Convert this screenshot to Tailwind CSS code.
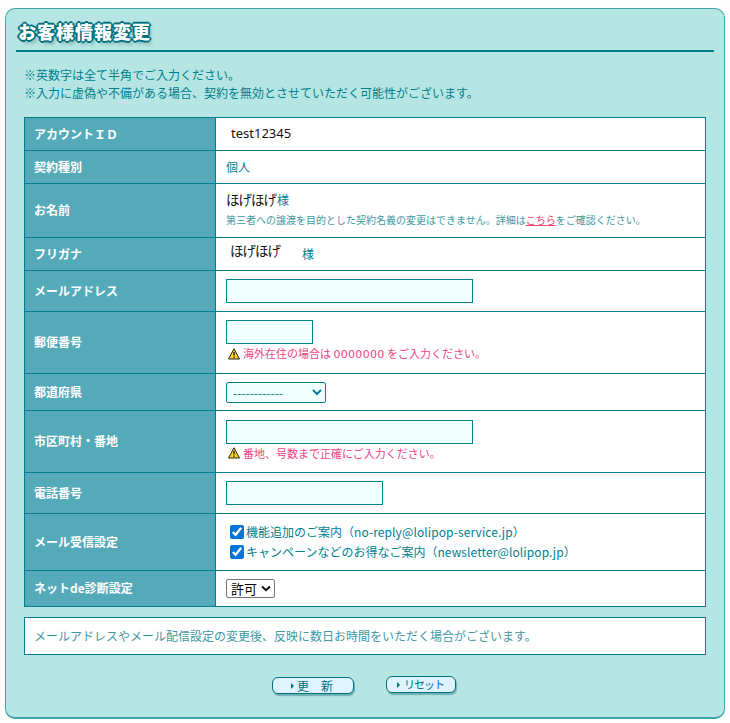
<!DOCTYPE html>
<html lang="ja">
<head>
    <meta charset="UTF-8">
    <title>お客様情報変更</title>
    <script src="https://cdn.jsdelivr.net/npm/@tailwindcss/browser@4"></script>
</head>
<body class="bg-[#fdfdfd] font-['Noto_Sans_CJK_JP','Noto_Sans',sans-serif] text-[12px] text-[#00808f]">
    <div class="ml-[5px] mt-[8px] w-[720px] h-[711px] bg-[#b5e6e3] border border-[#3fa3a8] border-b-2 rounded-[10px] px-[18px] pt-[9px]">
        <div class="-mx-[8px] h-[34px] border-b-2 border-[#00808f] pl-[2px]">
            <h1 class="text-[18px] leading-[26px] font-black tracking-[1px] text-white [text-shadow:-1px_-1px_0_#00707f,1px_-1px_0_#00707f,-1px_1px_0_#00707f,1px_1px_0_#00707f,0_2px_0_#00707f,2px_0_0_#00707f,-2px_0_0_#00707f,0_-2px_0_#00707f,3px_4px_3px_#8fbdba]">お客様情報変更</h1>
        </div>
        <div class="mt-[14px] leading-[18px]">
            <p>※英数字は全て半角でご入力ください。</p>
            <p>※入力に虚偽や不備がある場合、契約を無効とさせていただく可能性がございます。</p>
        </div>
        <table class="mt-[15px] w-[682px] table-fixed border-collapse border border-[#00808f] bg-white">
            <colgroup><col class="w-[191px]"><col></colgroup>
            <tbody>
                <tr class="h-[33px]">
                    <th class="border border-[#00808f] bg-[#55aab9] pl-[9px] pb-[1px] text-left font-bold text-white">アカウントＩＤ</th>
                    <td class="border border-[#00808f] pl-[15px] text-[13px] text-[#111] font-['Noto_Sans',sans-serif]">test12345</td>
                </tr>
                <tr class="h-[33px]">
                    <th class="border border-[#00808f] bg-[#55aab9] pl-[9px] pb-[1px] text-left font-bold text-white">契約種別</th>
                    <td class="border border-[#00808f] pl-[10px] pb-[1px]">個人</td>
                </tr>
                <tr class="h-[54px]">
                    <th class="border border-[#00808f] bg-[#55aab9] pl-[9px] pb-[1px] text-left font-bold text-white">お名前</th>
                    <td class="border border-[#00808f] pl-[10px] pb-[4px]">
                        <p class="leading-[18px]"><span class="text-[13.5px] tracking-[-1px] text-[#111] relative -top-[1px]">ほげほげ</span><span class="ml-[1px] relative -top-[1px]">様</span></p>
                        <p class="mt-[3px] text-[10px] leading-[14px] text-[#3f97a3]">第三者への譲渡を目的とした契約名義の変更はできません。詳細は<a class="text-[#f0446f] underline">こちら</a>をご確認ください。</p>
                    </td>
                </tr>
                <tr class="h-[33px]">
                    <th class="border border-[#00808f] bg-[#55aab9] pl-[9px] pb-[1px] text-left font-bold text-white">フリガナ</th>
                    <td class="border border-[#00808f] pl-[14px] pb-[1px]"><span class="text-[13.5px] tracking-[-1px] text-[#111] relative -top-[3px]">ほげほげ</span><span class="ml-[22px]">様</span></td>
                </tr>
                <tr class="h-[41px]">
                    <th class="border border-[#00808f] bg-[#55aab9] pl-[9px] text-left font-bold text-white">メールアドレス</th>
                    <td class="border border-[#00808f] pl-[10px]"><input type="text" class="block w-[247px] h-[24px] border border-[#00808f] bg-[#f0ffff]"></td>
                </tr>
                <tr class="h-[62px]">
                    <th class="border border-[#00808f] bg-[#55aab9] pl-[9px] pb-[1px] text-left font-bold text-white">郵便番号</th>
                    <td class="border border-[#00808f] pl-[10px] pb-[2px]">
                        <input type="text" class="block w-[87px] h-[24px] border border-[#00808f] bg-[#f0ffff]">
                        <p class="flex items-center gap-[3px] pl-[2px] text-[11px] leading-[18px] text-[#f0437f]">
                            <svg class="w-[12px] h-[12px]" viewBox="0 0 12 12"><path d="M6 .8 11.5 11H.5Z" fill="#ffd21f" stroke="#222" stroke-width="1" stroke-linejoin="round"/><path d="M6 4v3.6M6 8.5v1.3" stroke="#222" stroke-width="1.4"/></svg>
                            <span>海外在住の場合は <span class="font-['DejaVu_Sans',sans-serif] tracking-[0.3px]">0000000</span> をご入力ください。</span>
                        </p>
                    </td>
                </tr>
                <tr class="h-[37px]">
                    <th class="border border-[#00808f] bg-[#55aab9] pl-[9px] pb-[1px] text-left font-bold text-white">都道府県</th>
                    <td class="border border-[#00808f] pl-[10px]">
                        <select class="block w-[100px] h-[21px] border border-[#00808f] rounded-[2px] bg-[#f0ffff] text-[12px] text-[#00808f] pl-[2px]"><option>------------</option></select>
                    </td>
                </tr>
                <tr class="h-[62px]">
                    <th class="border border-[#00808f] bg-[#55aab9] pl-[9px] pb-[1px] text-left font-bold text-white">市区町村・番地</th>
                    <td class="border border-[#00808f] pl-[10px] pb-[2px]">
                        <input type="text" class="block w-[247px] h-[24px] border border-[#00808f] bg-[#f0ffff]">
                        <p class="flex items-center gap-[3px] pl-[2px] text-[11px] leading-[18px] text-[#f0437f]">
                            <svg class="w-[12px] h-[12px]" viewBox="0 0 12 12"><path d="M6 .8 11.5 11H.5Z" fill="#ffd21f" stroke="#222" stroke-width="1" stroke-linejoin="round"/><path d="M6 4v3.6M6 8.5v1.3" stroke="#222" stroke-width="1.4"/></svg>
                            <span>番地、号数まで正確にご入力ください。</span>
                        </p>
                    </td>
                </tr>
                <tr class="h-[41px]">
                    <th class="border border-[#00808f] bg-[#55aab9] pl-[9px] pb-[1px] text-left font-bold text-white">電話番号</th>
                    <td class="border border-[#00808f] pl-[10px]"><input type="text" class="block w-[157px] h-[24px] border border-[#00808f] bg-[#f0ffff]"></td>
                </tr>
                <tr class="h-[57px]">
                    <th class="border border-[#00808f] bg-[#55aab9] pl-[9px] text-left font-bold text-white">メール受信設定</th>
                    <td class="border border-[#00808f] pl-[14px]">
                        <label class="flex items-center gap-[2px] h-[20px]"><input type="checkbox" checked class="w-[14px] h-[14px] accent-[#0075d9]"><span>機能追加のご案内（<span class="tracking-[0.1px]">no-reply@lolipop-service.jp</span>）</span></label>
                        <label class="flex items-center gap-[2px] h-[20px]"><input type="checkbox" checked class="w-[14px] h-[14px] accent-[#0075d9]"><span>キャンペーンなどのお得なご案内（<span class="tracking-[0.1px]">newsletter@lolipop.jp</span>）</span></label>
                    </td>
                </tr>
                <tr class="h-[36px]">
                    <th class="border border-[#00808f] bg-[#55aab9] pl-[9px] pb-[1px] text-left font-bold text-white">ネットde診断設定</th>
                    <td class="border border-[#00808f] pl-[10px]">
                        <div class="flex items-center justify-between w-[49px] h-[19px] border border-[#767676] rounded-[2px] bg-white pl-[4px] pr-[3px] text-[13px] leading-[17px] text-black">
                            <span>許可</span>
                            <svg class="w-[10px] h-[7px]" viewBox="0 0 10 7"><path d="M1 1.5 5 5.2 9 1.5" fill="none" stroke="#111" stroke-width="2"/></svg>
                        </div>
                    </td>
                </tr>
            </tbody>
        </table>
        <div class="mt-[10px] w-[682px] h-[38px] flex items-center border border-[#00808f] bg-white pl-[9px] text-[#3f97a3]">メールアドレスやメール配信設定の変更後、反映に数日お時間をいただく場合がございます。</div>
        <div class="mt-[21px] ml-[248px] flex items-start gap-[32px]">
            <button class="mt-[1px] w-[82px] h-[17px] flex items-center pl-[18px] border border-[#00707f] rounded-[6px] bg-[#dff4ff] shadow-[1px_2px_1px_#6fb0b3] text-[12px] leading-none text-[#006f80]"><span class="mr-[3px] border-y-[3px] border-y-transparent border-l-[3px] border-l-[#00707f]"></span>更　新</button>
            <button class="w-[70px] h-[17px] flex items-center pl-[10px] border border-[#00707f] rounded-[6px] bg-[#dff4ff] shadow-[1px_2px_1px_#6fb0b3] text-[11px] tracking-[-1px] leading-none text-[#006f80]"><span class="mr-[4px] border-y-[3px] border-y-transparent border-l-[3px] border-l-[#00707f]"></span>リセット</button>
        </div>
    </div>
</body>
</html>
